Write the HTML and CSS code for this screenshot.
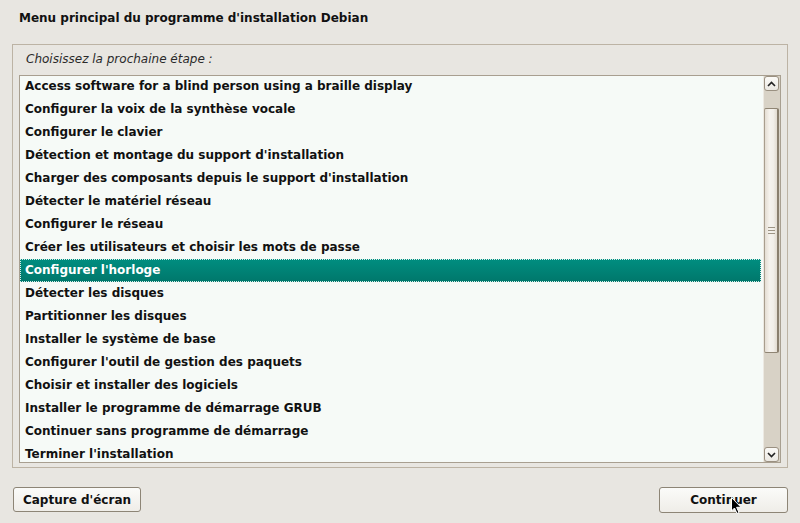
FILE: index.html
```html
<!DOCTYPE html>
<html lang="fr">
<head>
<meta charset="utf-8">
<link rel="stylesheet" href="styles.css">
</head>
<body>
<div class="page">
  <h1 class="title">Menu principal du programme d'installation Debian</h1>
  <div class="frame">
    <div class="prompt">Choisissez la prochaine étape :</div>
    <div class="listbox">
      <div class="viewport">
        <ul class="items">
          <li class="item">Access software for a blind person using a braille display</li>
          <li class="item">Configurer la voix de la synthèse vocale</li>
          <li class="item">Configurer le clavier</li>
          <li class="item">Détection et montage du support d'installation</li>
          <li class="item">Charger des composants depuis le support d'installation</li>
          <li class="item">Détecter le matériel réseau</li>
          <li class="item">Configurer le réseau</li>
          <li class="item">Créer les utilisateurs et choisir les mots de passe</li>
          <li class="item selected">Configurer l'horloge</li>
          <li class="item">Détecter les disques</li>
          <li class="item">Partitionner les disques</li>
          <li class="item">Installer le système de base</li>
          <li class="item">Configurer l'outil de gestion des paquets</li>
          <li class="item">Choisir et installer des logiciels</li>
          <li class="item">Installer le programme de démarrage GRUB</li>
          <li class="item">Continuer sans programme de démarrage</li>
          <li class="item">Terminer l'installation</li>
        </ul>
      </div>
      <div class="scrollbar">
        <div class="sb-btn">
          <svg width="9" height="6" viewBox="0 0 9 6"><path d="M1 5 L4.5 1.5 L8 5" fill="none" stroke="#222" stroke-width="1.6"/></svg>
        </div>
        <div class="trough">
          <div class="thumb">
            <div class="grip"><span></span><span></span><span></span></div>
          </div>
        </div>
        <div class="sb-btn">
          <svg width="9" height="6" viewBox="0 0 9 6"><path d="M1 1 L4.5 4.5 L8 1" fill="none" stroke="#222" stroke-width="1.6"/></svg>
        </div>
      </div>
    </div>
  </div>
  <div class="buttons">
    <button class="btn btn-left">Capture d'écran</button>
    <button class="btn btn-right">Continuer</button>
  </div>
  <svg class="cursor" width="12" height="18" viewBox="0 0 12 18"><path d="M0.5 0.5 L0.5 14 L3.5 11 L6 16.5 L8 15.5 L5.6 10.3 L10 10.3 Z" fill="#000" stroke="#fff" stroke-width="1"/></svg>
</div>
</body>
</html>
```
FILE: styles.css
```css
* { box-sizing: border-box; }
html, body {
  margin: 0;
  padding: 0;
  background: #e8e6e1;
}
body {
  font-family: "DejaVu Sans", "Liberation Sans", sans-serif;
  color: #111;
  width: 800px;
  height: 523px;
  overflow: hidden;
}
.page {
  position: relative;
  width: 800px;
  height: 523px;
}
.title {
  margin: 0;
  padding: 11px 0 0 19px;
  height: 44px;
  font-size: 12px;
  line-height: 15px;
  font-weight: bold;
}
.frame {
  margin: 0 12px 0 12px;
  width: 776px;
  height: 424px;
  border: 1px solid #bcb3a4;
  padding: 0 6px 4px 6px;
  display: flex;
  flex-direction: column;
}
.prompt {
  height: 30px;
  padding: 7px 0 0 7px;
  font-size: 12px;
  line-height: 15px;
  font-style: italic;
  color: #2a2a2a;
}
.listbox {
  flex: 1;
  border: 1px solid #a89f90;
  background: #f6faf7;
  display: flex;
  overflow: hidden;
}
.viewport {
  flex: 1;
  overflow: hidden;
}
.items {
  list-style: none;
  margin: -1px 0 0 0;
  padding: 0 2px 0 0;
}
.item {
  height: 23px;
  line-height: 23px;
  padding-left: 5px;
  font-size: 12px;
  font-weight: bold;
  white-space: nowrap;
}
.item.selected {
  background: linear-gradient(#008e80, #00776b);
  color: #fff;
  outline: 1px dotted #d8eee9;
  outline-offset: -1px;
}
.scrollbar {
  width: 17px;
  background: #d8d2c6;
  border-left: 1px solid #ece9e2;
  display: flex;
  flex-direction: column;
  padding-right: 1px;
}
.sb-btn {
  height: 15px;
  border: 1px solid #9a9081;
  border-radius: 3px;
  background: linear-gradient(#fbfaf7, #ebe8e2);
  display: flex;
  align-items: center;
  justify-content: center;
}
.trough {
  flex: 1;
  padding: 17px 0 0 0;
}
.thumb {
  height: 245px;
  border: 1px solid #8f8574;
  border-left-color: #a89e8e;
  border-right: 2px solid #8a7f6e;
  border-radius: 2px;
  background: linear-gradient(90deg, #e4ddd3, #f6f3ee 40%, #f2efe9 70%, #e2dbd0);
  display: flex;
  align-items: center;
  justify-content: center;
}
.grip {
  display: flex;
  flex-direction: column;
  gap: 2px;
}
.grip span {
  display: block;
  width: 7px;
  height: 1px;
  background: #9d9484;
}
.buttons {
  display: flex;
  justify-content: space-between;
  padding: 19px 12px 0 13px;
}
.btn {
  font-family: "DejaVu Sans", "Liberation Sans", sans-serif;
  font-size: 12px;
  font-weight: bold;
  color: #111;
  height: 25px;
  border: 1px solid #8d8576;
  border-radius: 3px;
  background: linear-gradient(#fbfbf9, #efede8);
  padding: 0;
}
.btn-left { width: 128px; }
.btn-right { width: 129px; height: 26px; }
.cursor {
  position: absolute;
  left: 731px;
  top: 497px;
}
```
